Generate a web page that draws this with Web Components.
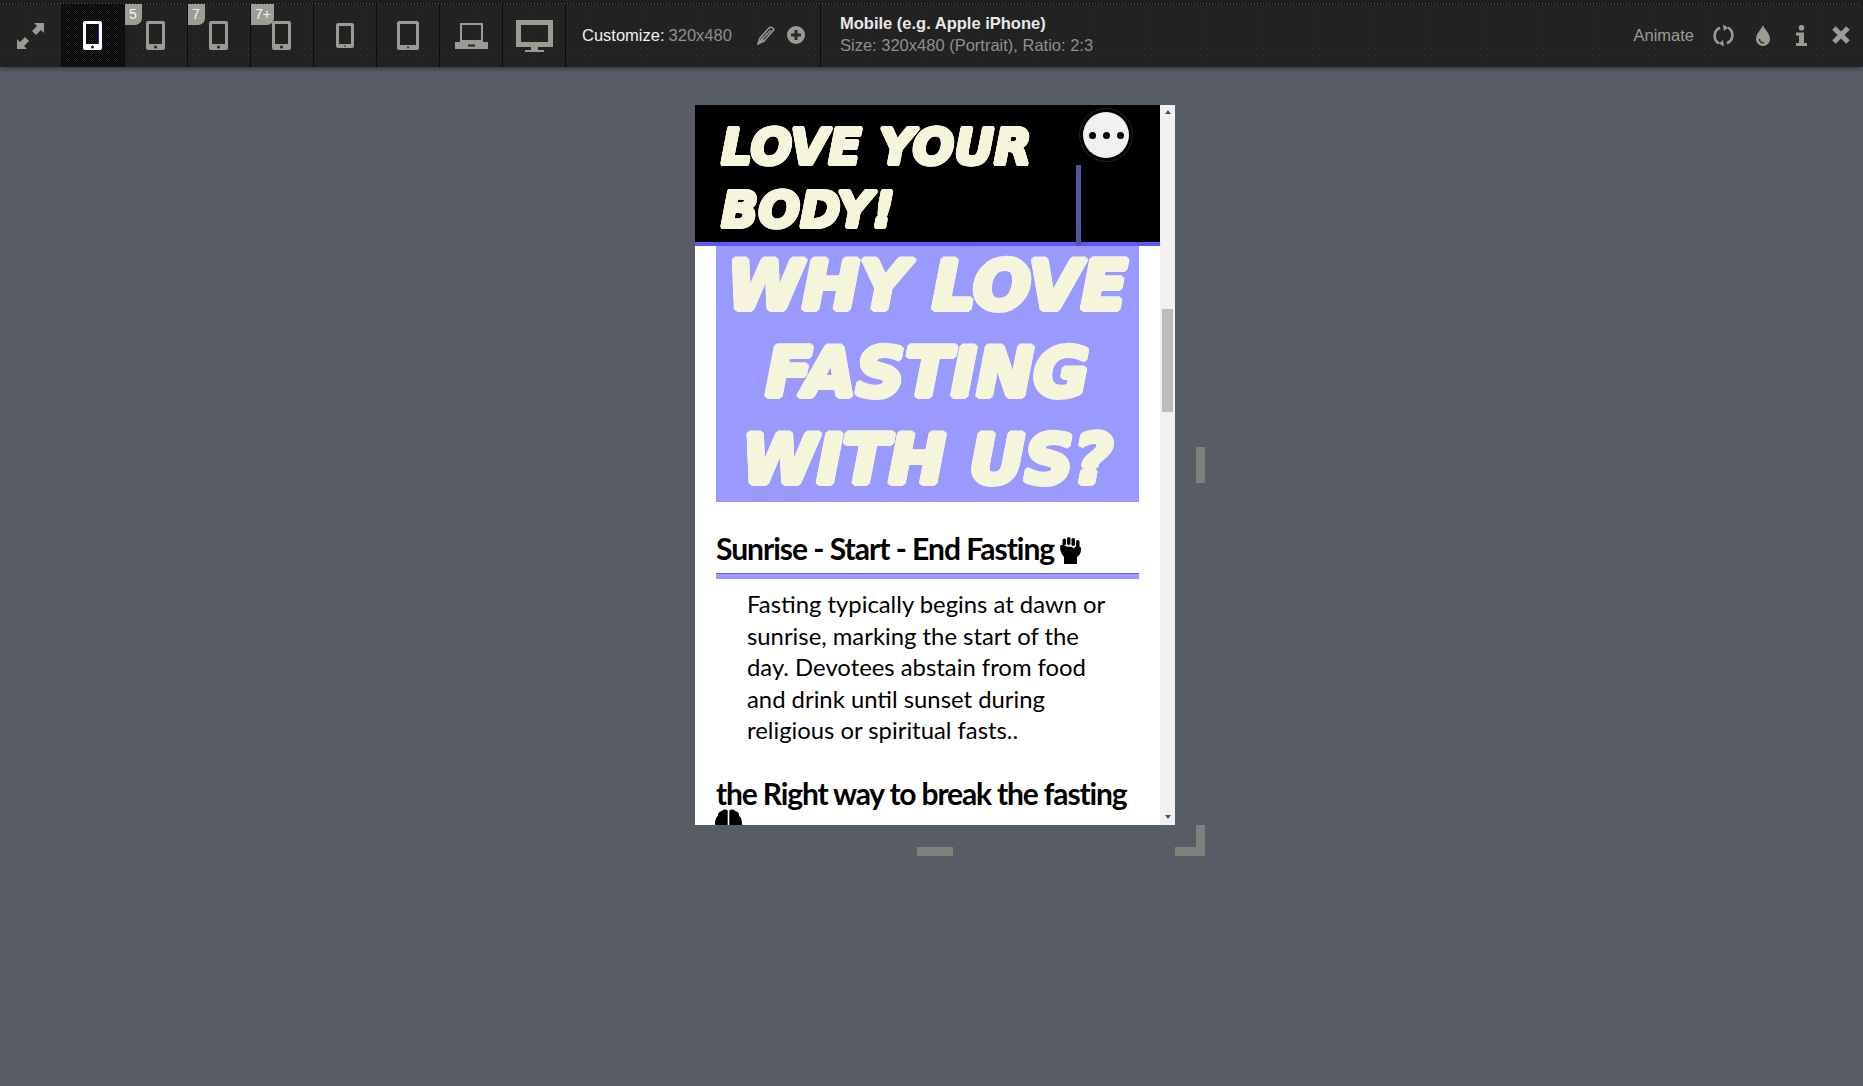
<!DOCTYPE html>
<html>
<head>
<meta charset="utf-8">
<title>Responsive preview</title>
<style>
html, body { margin: 0; height: 100%; }
body { background: #585c65; overflow: hidden; font-family: "Liberation Sans", Arial, sans-serif; }
</style>
</head>
<body>
<preview-toolbar>
  <tool-cell icon="arrows" style="width:61px"></tool-cell>
  <tool-cell icon="phone" active></tool-cell>
  <tool-cell icon="phone" badge="5"></tool-cell>
  <tool-cell icon="phone" badge="7"></tool-cell>
  <tool-cell icon="phone" badge="7+"></tool-cell>
  <tool-cell icon="tablet-s"></tool-cell>
  <tool-cell icon="tablet-l"></tool-cell>
  <tool-cell icon="laptop"></tool-cell>
  <tool-cell icon="monitor"></tool-cell>
  <customize-box></customize-box>
  <device-info></device-info>
  <tool-actions></tool-actions>
</preview-toolbar>
<preview-stage>
  <device-frame>
    <site-header>LOVE YOUR BODY!</site-header>
    <hero-title>WHY LOVE FASTING WITH US?</hero-title>
    <article-block heading="Sunrise - Start - End Fasting" emoji="fist">
      Fasting typically begins at dawn or sunrise, marking the start of the day. Devotees abstain from food and drink until sunset during religious or spiritual fasts..
    </article-block>
    <article-block heading="the Right way to break the fasting" emoji="brain"></article-block>
  </device-frame>
</preview-stage>

<script>
const GREY = "#9b9b94";

function device(w, h, bw, foot, dot, extra) {
  return `<svg width="${w}" height="${h}" viewBox="0 0 ${w} ${h}">
    <path fill-rule="evenodd" fill="currentColor" d="M2 0h${w-4}a2 2 0 0 1 2 2v${h-4}a2 2 0 0 1-2 2H2a2 2 0 0 1-2-2V2a2 2 0 0 1 2-2zM${bw} ${bw}v${h-bw-foot}h${w-2*bw}V${bw}z"/>
    <circle cx="${w/2}" cy="${h-foot/2}" r="${dot}" fill="#222"/>${extra || ""}
  </svg>`;
}

const ICONS = {
  arrows: `<svg width="27" height="26" viewBox="0 0 27 26"><g fill="currentColor">
    <path d="M17 0H27V10L24 7 19 12 15 8 20 3z"/>
    <path d="M0 16L3 19 8 14 12 18 7 23 10 26H0z"/></g></svg>`,
  phone: device(19, 29, 3, 6, 1.5),
  phoneActive: device(19, 29, 3, 6, 1.5, `<rect x="15" y="3" width="1" height="20" fill="#2b2be0"/>`),
  "tablet-s": device(18, 25, 3, 4, 0.8),
  "tablet-l": device(22, 29, 3, 5, 1),
  laptop: `<svg width="33" height="26" viewBox="0 0 33 26"><g fill="currentColor">
    <path fill-rule="evenodd" d="M5 0h23v19H5zM7 2v15h19V2z"/>
    <path fill-rule="evenodd" d="M0 19h33v7H0zM13 21.500v2h7v-2z"/></g></svg>`,
  monitor: `<svg width="37" height="32" viewBox="0 0 37 32"><g fill="currentColor">
    <path fill-rule="evenodd" d="M0 0h37v27H0zM5 5v17h27V5z"/>
    <path d="M15 27h7v3h-7zM9 30h19v2H9z"/></g></svg>`,
  pencil: `<svg width="18" height="19" viewBox="0 0 18 19" fill="none" stroke="currentColor" stroke-width="1.500">
    <path d="M1 18l2-6L12 2c2-1.500 4.500 0 5 1.500L7 15z"/><path d="M5 13L14 4M2 17l3-4 2 2z"/></svg>`,
  plus: `<svg width="18" height="18" viewBox="0 0 18 18"><circle cx="9" cy="9" r="9" fill="currentColor"/>
    <path d="M7.500 4h3v3.500H14v3h-3.500V14h-3v-3.500H4v-3h3.500z" fill="#2a2a2a"/></svg>`,
  refresh: `<svg width="21" height="23" viewBox="0 0 21 23" fill="none" stroke="currentColor" stroke-width="2.600">
    <path d="M6 19.500A8.800 8.800 0 0 1 7 3.800"/><path d="M15 3.500A8.800 8.800 0 0 1 14 19.200"/>
    <path d="M10 0.500L15 3.500 11 7z" fill="currentColor" stroke="none"/><path d="M11 22.500L6 19.500l4-3.500z" fill="currentColor" stroke="none"/></svg>`,
  drop: `<svg width="14" height="21" viewBox="0 0 14 21"><path fill="currentColor" d="M7 0c1 4 7 8 7 14a7 7 0 0 1-14 0C0 8 6 4 7 0z"/>
    <path d="M3.500 14c0 3 2 4 4.500 4" fill="none" stroke="#222" stroke-width="1.300"/></svg>`,
  info: `<svg width="11" height="21" viewBox="0 0 11 21"><g fill="currentColor"><circle cx="5.500" cy="2.800" r="2.800"/>
    <path d="M0 7.500h8V18h3v3H0v-3h3v-7.500H0z"/></g></svg>`,
  close: `<svg width="18" height="18" viewBox="0 0 18 18"><path d="M2 2l14 14M16 2L2 16" stroke="currentColor" stroke-width="5" fill="none"/></svg>`,
  fist: `<svg width="22" height="27" viewBox="0 0 22 27"><g fill="#000">
    <rect x="3.500" y="1.500" width="3.500" height="7" rx="1.700"/><rect x="8" y="0" width="3.500" height="8" rx="1.700"/>
    <rect x="12.500" y="1" width="3.500" height="8" rx="1.700"/><rect x="17" y="3" width="3.500" height="7.500" rx="1.700"/>
    <path d="M1 9.500c0-2 3-2 4-1 2 1.500 5 1 8 1.500 1.500.5 1.500 2 0 2.500l-2 1c1.500 0 3-2 4-2.500 1-.8 1-1.500 2.500-1.500h3c1 0 1.500 1 1.500 3 0 4-2 6-4 7.500V27H5v-7C3 18 1 14 1 9.500z"/></g></svg>`,
  brain: `<svg width="27" height="26" viewBox="0 0 27 26"><path fill="#000" d="M12.700 1.500C11 0 8 0 7 2 4 2 2.500 5 3 7 0 9 0 13 0 16c0 3 3 6 8 6 2 2 4.700 2 4.700 0zM14.300 1.500C16 0 19 0 20 2c3 0 4.500 3 4 5 3 2 3 6 3 9 0 3-3 6-8 6-2 2-4.700 2-4.700 0z"/></svg>`
};

class PreviewToolbar extends HTMLElement {
  constructor() {
    super();
    this.attachShadow({mode: "open"}).innerHTML = `
    <style>
      :host {
        display: flex;
        height: 67px;
        box-sizing: border-box;
        padding-top: 4px;
        position: relative;
        background-color: #222;
        background-image: radial-gradient(circle, #303030 0.6px, transparent 0.8px);
        background-size: 7px 7px;
        border-top: 3px solid #1d1d1d;
        box-shadow: 0 1px 5px rgba(30,32,36,.7);
        font-family: "Liberation Sans", Arial, sans-serif;
      }
      :host::before {
        content: "";
        position: absolute;
        left: 0; right: 0; top: 0;
        height: 1px;
        background: repeating-linear-gradient(90deg, #555 0 1px, #111 1px 3px);
      }
    </style>
    <slot></slot>`;
  }
}

class ToolCell extends HTMLElement {
  constructor() {
    super();
    const active = this.hasAttribute("active");
    const icon = ICONS[active ? "phoneActive" : this.getAttribute("icon")];
    const badge = this.getAttribute("badge");
    this.attachShadow({mode: "open"}).innerHTML = `
    <style>
      :host {
        display: flex;
        align-items: center;
        justify-content: center;
        width: 62px;
        margin-top: -3px;
        border-right: 1px solid #0c0c0c;
        position: relative;
        color: ${active ? "#fff" : GREY};
      }
      :host([active]) {
        background-color: #050505;
        background-image: conic-gradient(#1c1c1c 25%, transparent 0 50%, #1c1c1c 0 75%, transparent 0);
        background-size: 2px 2px;
      }
      :host([icon="phone"]) svg { margin-left: -1px; }
      svg { display: block; }
      .badge {
        position: absolute;
        left: 0; top: 0;
        min-width: 17px;
        height: 21px;
        box-sizing: border-box;
        padding: 2px 3px 0 4px;
        background: #9d9d96;
        color: #f4f4f0;
        font-size: 14px;
        line-height: 16px;
        border-bottom-right-radius: 7px;
      }
    </style>
    ${badge ? `<span class="badge">${badge}</span>` : ""}
    ${icon}`;
  }
}

class CustomizeBox extends HTMLElement {
  constructor() {
    super();
    this.attachShadow({mode: "open"}).innerHTML = `
    <style>
      :host {
        display: flex;
        align-items: center;
        width: 255px;
        box-sizing: border-box;
        margin-top: -4px;
        padding: 0 0 0 16px;
        border-right: 1px solid #0c0c0c;
        font-size: 16.500px;
        color: #f0f0f0;
      }
      .v { color: #8f8f8f; margin-left: 4px; }
      .i { color: ${GREY}; display: flex; }
      .pen { margin-left: 25px; }
      .add { margin-left: 12px; }
    </style>
    <span>Customize:</span><span class="v">320x480</span>
    <span class="i pen">${ICONS.pencil}</span><span class="i add">${ICONS.plus}</span>`;
  }
}

class DeviceInfo extends HTMLElement {
  constructor() {
    super();
    this.attachShadow({mode: "open"}).innerHTML = `
    <style>
      :host {
        display: flex;
        flex-direction: column;
        justify-content: center;
        margin-top: -6px;
        padding-left: 19px;
        font-size: 16.500px;
        line-height: 22px;
        color: #8f8f8f;
      }
      b { color: #e8e8e8; font-weight: 700; }
    </style>
    <b>Mobile (e.g. Apple iPhone)</b>
    <span>Size: 320x480 (Portrait), Ratio: 2:3</span>`;
  }
}

class ToolActions extends HTMLElement {
  constructor() {
    super();
    this.attachShadow({mode: "open"}).innerHTML = `
    <style>
      :host {
        display: flex;
        align-items: center;
        margin: -4px 0 0 auto;
        padding-right: 3px;
        font-size: 16.500px;
        color: ${GREY};
      }
      .label { margin-right: 10px; }
      .btn { width: 39px; display: flex; justify-content: center; }
    </style>
    <span class="label">Animate</span>
    <span class="btn">${ICONS.refresh}</span>
    <span class="btn">${ICONS.drop}</span>
    <span class="btn">${ICONS.info}</span>
    <span class="btn">${ICONS.close}</span>`;
  }
}

class PreviewStage extends HTMLElement {
  constructor() {
    super();
    this.attachShadow({mode: "open"}).innerHTML = `
    <style>
      :host { display: block; padding: 38px 0 0 695px; }
    </style>
    <slot></slot>`;
  }
}

class DeviceFrame extends HTMLElement {
  constructor() {
    super();
    this.attachShadow({mode: "open"}).innerHTML = `
    <style>
      :host {
        display: flex;
        width: 480px;
        height: 720px;
        position: relative;
        background: #fff;
      }
      .view { width: 465px; overflow: hidden; }
      .bar {
        width: 15px;
        box-sizing: border-box;
        background: #f1f1f1;
        display: flex;
        flex-direction: column;
        align-items: center;
      }
      .arrow { width: 0; height: 0; border: 3.500px solid transparent; }
      .up { border-bottom: 4px solid #505050; border-top: 0; margin-top: 5px; }
      .down { border-top: 4px solid #505050; border-bottom: 0; margin: auto 0 6px; }
      .thumb { width: 11px; height: 103px; margin-top: 195px; background: #bcbcbc; }
      .h { position: absolute; background: #7f827c; }
      .right { left: 501px; top: 342px; width: 9px; height: 36px; }
      .bottom { left: 222px; top: 742px; width: 36px; height: 9px; }
      .cv { left: 501px; top: 720px; width: 9px; height: 31px; }
      .ch { left: 480px; top: 742px; width: 21px; height: 9px; }
    </style>
    <div class="view"><slot></slot></div>
    <div class="bar"><i class="arrow up"></i><i class="thumb"></i><i class="arrow down"></i></div>
    <i class="h right"></i><i class="h bottom"></i><i class="h cv"></i><i class="h ch"></i>`;
  }
}

const CHUNKY = `
  font-family: "DejaVu Sans", sans-serif;
  font-weight: 700;
  font-style: italic;
  color: #f5f5dc;
`;
function ring(r) {
  const out = [];
  for (let a = 0; a < 360; a += 30) {
    const t = a * Math.PI / 180;
    out.push(`${(r * Math.cos(t)).toFixed(2)}px ${(r * Math.sin(t)).toFixed(2)}px 0 #f5f5dc`);
  }
  return out.join(",");
}

class SiteHeader extends HTMLElement {
  constructor() {
    super();
    this.attachShadow({mode: "open"}).innerHTML = `
    <style>
      :host {
        display: block;
        height: 137px;
        box-sizing: content-box;
        position: relative;
        background: #000;
        border-bottom: 4px solid #5a5cf2;
      }
      h1 {
        margin: 0;
        padding: 11px 0 0 26px;
        width: 340px;
        ${CHUNKY}
        font-size: 49px;
        line-height: 63px;
        text-shadow: ${ring(1.8)};
      }
      .menu {
        position: absolute;
        left: 388px; top: 7px;
        width: 46px; height: 46px;
        border-radius: 50%;
        background: #f1f1f1;
        box-shadow: 0 0 0 3px #000, 0 0 0 4px #222;
        display: flex;
        align-items: center;
        justify-content: center;
        gap: 7px;
      }
      .menu i { width: 7px; height: 7px; border-radius: 50%; background: #000; }
      .rule { position: absolute; left: 381px; top: 60px; width: 5px; height: 81px; background: #55559f; }
    </style>
    <h1><slot></slot></h1>
    <div class="menu"><i></i><i></i><i></i></div>
    <div class="rule"></div>`;
  }
}

class HeroTitle extends HTMLElement {
  constructor() {
    super();
    this.attachShadow({mode: "open"}).innerHTML = `
    <style>
      :host {
        display: block;
        margin: 0 21px;
        height: 256px;
        background: #9999ff;
        ${CHUNKY}
        font-size: 68px;
        line-height: 87px;
        text-align: center;
        text-shadow: ${ring(2.8)};
      }
      div { transform: translateY(-4px); }
    </style>
    <div><slot></slot></div>`;
  }
}

class ArticleBlock extends HTMLElement {
  constructor() {
    super();
    const emoji = this.getAttribute("emoji");
    this.attachShadow({mode: "open"}).innerHTML = `
    <style>
      :host {
        display: block;
        margin: 0 21px;
        padding-top: 26px;
        font-family: Lato, sans-serif;
        color: #000;
      }
      h2 {
        margin: 0;
        font-size: 30px;
        line-height: 40px;
        font-weight: 700;
        letter-spacing: -1px;
        padding-bottom: 6px;
        border-bottom: 5px solid #9999ff;
        box-shadow: inset 0 -1px 0 #6666cc;
      }
      :host([emoji="brain"]) h2 {
        border: 0;
        padding: 0;
        box-shadow: none;
        line-height: 26px;
        margin-top: 8px;
        letter-spacing: -1.150px;
      }
      .icon { display: inline-block; vertical-align: -4px; margin-left: -1px; }
      .icon svg { display: block; }
      p {
        margin: 9px 0 0;
        padding: 0 31px;
        font-size: 23.850px;
        line-height: 31.500px;
      }
      p:empty { display: none; }
    </style>
    <h2>${this.getAttribute("heading")} <span class="icon">${ICONS[emoji]}</span></h2>
    <p><slot></slot></p>`;
  }
}

customElements.define("preview-toolbar", PreviewToolbar);
customElements.define("tool-cell", ToolCell);
customElements.define("customize-box", CustomizeBox);
customElements.define("device-info", DeviceInfo);
customElements.define("tool-actions", ToolActions);
customElements.define("preview-stage", PreviewStage);
customElements.define("device-frame", DeviceFrame);
customElements.define("site-header", SiteHeader);
customElements.define("hero-title", HeroTitle);
customElements.define("article-block", ArticleBlock);
</script>
</body>
</html>
